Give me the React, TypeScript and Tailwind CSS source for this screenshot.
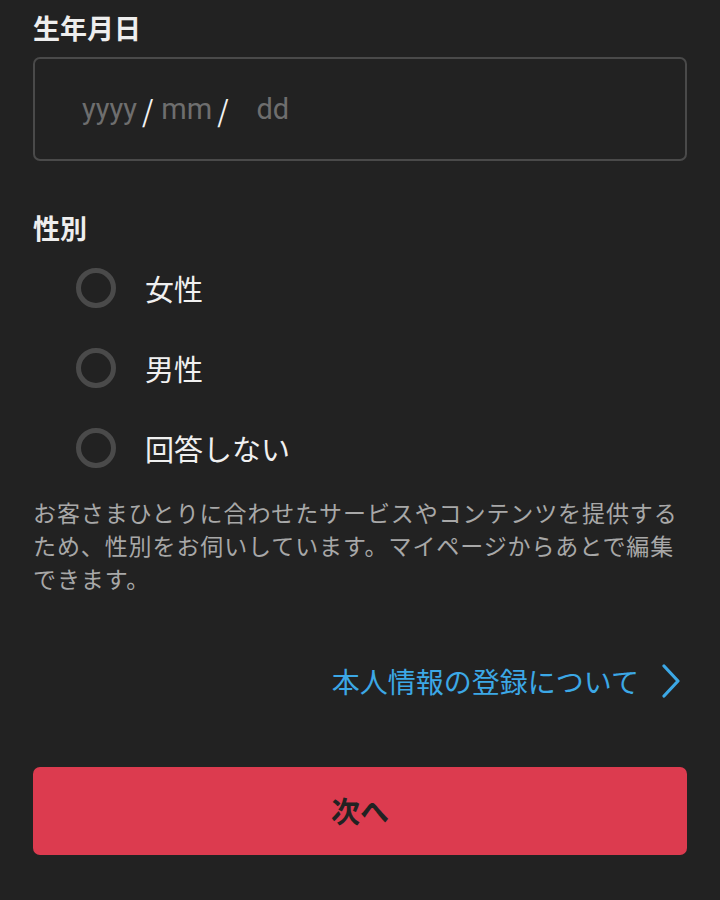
import React from "react";

const font = { fontFamily: '"Noto Sans CJK JP", "Noto Sans", sans-serif' };
const latin = { fontFamily: 'Roboto, "Noto Sans", sans-serif' };

function Radio({ label }: { label: string }) {
  return (
    <label className="flex h-[80px] items-center pl-[43px]">
      <span className="box-border block h-[40px] w-[40px] rounded-full border-[5px] border-[#4a4a4a]" />
      <span className="ml-[29px] text-[29px] leading-[40px] text-[#f0f0f0]">{label}</span>
    </label>
  );
}

export default function App() {
  return (
    <div className="min-h-[900px] w-full bg-[#222222] px-[33px] pt-[8px]" style={font}>
      <div className="h-[40px] text-[27px] font-bold leading-[40px] text-[#eeeeee]">生年月日</div>
      <div className="mt-[9px] flex h-[104px] items-center rounded-[7px] border-2 border-[#4a4a4a] pl-[47px] text-[29px] leading-[40px]">
        <span className="text-[#6e6e6e]" style={latin}>yyyy</span>
        <span className="ml-[5px] text-[#f2f2f2]">/</span>
        <span className="ml-[8px] text-[#6e6e6e]" style={latin}>mm</span>
        <span className="ml-[5px] text-[#f2f2f2]">/</span>
        <span className="ml-[28px] text-[#6e6e6e]" style={latin}>dd</span>
      </div>
      <div className="mt-[47px] h-[40px] text-[27px] font-bold leading-[40px] text-[#eeeeee]">性別</div>
      <Radio label="女性" />
      <Radio label="男性" />
      <Radio label="回答しない" />
      <p className="mt-[8px] text-[23px] leading-[33px] tracking-[0.9px] text-[#a8a8a8]">
        お客さまひとりに合わせたサービスやコンテンツを提供するため、性別をお伺いしています。マイページからあとで編集できます。
      </p>
      <div className="mt-[66px] flex h-[40px] items-center justify-end pr-[6px]">
        <span className="text-[28px] leading-[40px] text-[#3ca8e6]">本人情報の登録について</span>
        <svg className="ml-[22px]" width="20" height="34" viewBox="0 0 20 34" fill="none">
          <path d="M3 2 L17 17 L3 32" stroke="#3ca8e6" strokeWidth="3.2" strokeLinecap="round" strokeLinejoin="round" />
        </svg>
      </div>
      <button className="mt-[66px] flex h-[88px] w-full items-center justify-center rounded-[7px] bg-[#dc3b4f] text-[29px] font-bold text-[#222222]">
        次へ
      </button>
    </div>
  );
}
